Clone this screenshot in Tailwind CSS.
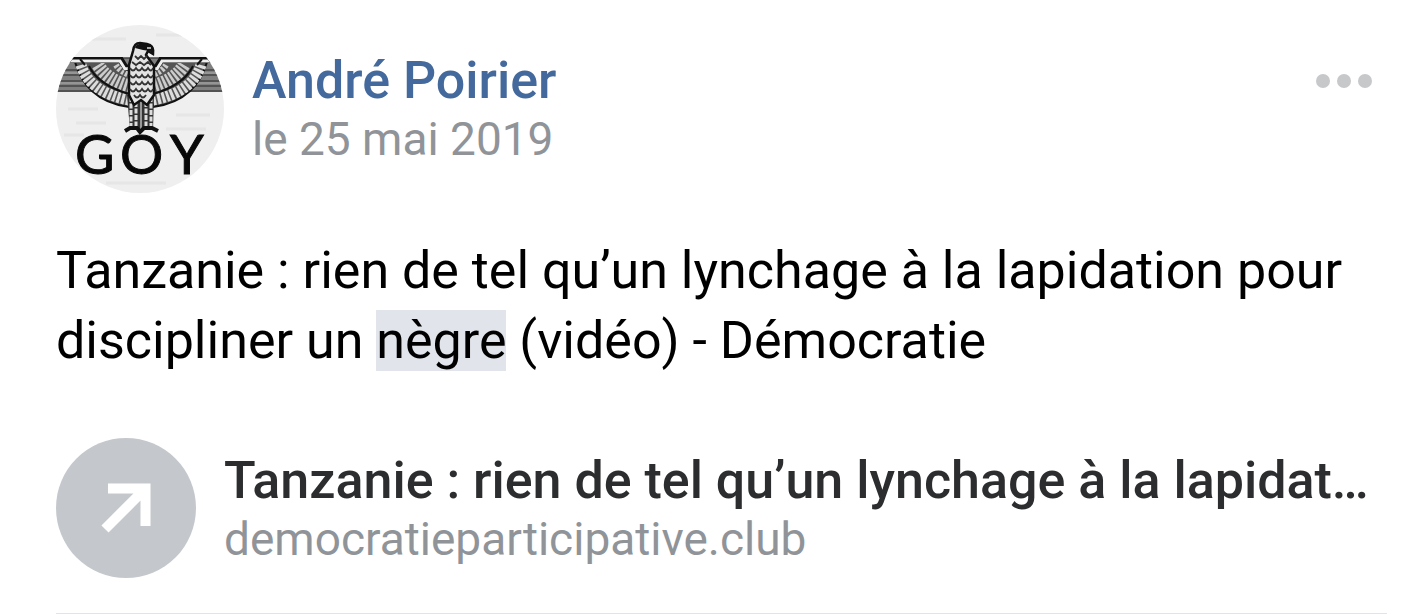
<!DOCTYPE html>
<html lang="fr">
<head>
  <meta charset="UTF-8" />
  <meta name="viewport" content="width=device-width, initial-scale=1.0" />
  <title>André Poirier</title>
  <script src="https://cdn.jsdelivr.net/npm/@tailwindcss/browser@4"></script>
</head>
<body class="bg-white font-[Roboto,sans-serif]">

<article class="ml-14 mr-9 pt-[25px] border-b border-[#e1e3e6]">
  <header class="flex items-start">
    <svg class="size-[168px] shrink-0 rounded-full" viewBox="0 0 168 168" role="img" aria-label="Avatar">
      <rect width="168" height="168" fill="#efefef" />
      <path d="M30 14h40M100 10h30M12 84h30M120 90h34M20 98h30M8 110h20M50 158h60M110 104h40" stroke="#e6e6e6" stroke-width="3" />
      <rect y="33" width="168" height="34" fill="#808080" />
      <path d="M0 33H168M0 45H168M0 50H168M0 56H168M0 61H168M0 66H168" stroke="#444" stroke-width="1.5" />
      <path d="M0 48H168M0 58H168" stroke="#aaa" />
      <defs>
        <!-- left wing, mirrored for the right one -->
        <g id="wing">
          <path d="M19 37Q24 55 36 66Q50 79 73 82L78 42L69 45L64 37Z" fill="#555" stroke="#111" stroke-width="2" />
          <path d="M25 40Q33 67 73 75" fill="none" stroke="#ddd" stroke-width="11" stroke-dasharray="3 1.6" />
          <path d="M42 40Q51 55 74 61" fill="none" stroke="#ccc" stroke-width="13" stroke-dasharray="2.600 1.600" />
          <path d="M60 40Q64 47 76 51" fill="none" stroke="#ccc" stroke-width="6" stroke-dasharray="2.600 1.600" />
          <path d="M33 41Q42 60 73 69" fill="none" stroke="#111" stroke-width="2" />
          <path d="M12 35H65L70 43L77 42" fill="none" stroke="#111" stroke-width="6" />
          <path d="M10 36H64L69 44L77 43" fill="none" stroke="#eee" stroke-width="3" />
          <path d="M24 34L29 40" stroke="#111" stroke-width="2" />
        </g>
      </defs>
      <use href="#wing" />
      <use href="#wing" transform="translate(170 0) scale(-1 1)" />
      <path d="M71 70H98L97 105H74Z" fill="#333" />
      <path d="M75 72V103M80 77V105M90 77V105M95 72V103" stroke="#ddd" stroke-width="3" stroke-dasharray="5 1.500" />
      <path d="M85 76V105" stroke="#999" stroke-width="2" />
      <path d="M77 26Q78 18 84 18L91 19Q98 20 97 29L92 26L90 30L98 41V70L91 80L85 75L78 80L73 70V40Z" fill="#e4e4e4" stroke="#111" stroke-width="2.500" />
      <path d="M79 23Q81 17 91 19Q97 19 98 24L96 29L94 26L87 25Z" fill="#111" />
      <path d="M91 23H95" stroke="#ddd" stroke-width="1.500" />
      <path d="M79 31l3 3 3-3 3 3 3-3M76 37l4 3 4-3 4 3 4-3 3 3M74 43q3 5 6 0q3 5 6 0q3 5 6 0q3 5 5 0M74 50q3 5 6 0q3 5 6 0q3 5 6 0q3 5 5 0M74 57q3 5 6 0q3 5 6 0q3 5 6 0q3 5 5 0M74 64q3 5 6 0q3 5 6 0q3 5 6 0q3 5 5 0M78 70q3 5 6 0q3 5 6 0" fill="none" stroke="#333" stroke-width="1.800" />
      <path d="M69 106L74 103H81L84 107L88 103H96L102 106" fill="none" stroke="#111" stroke-width="4" />
      <text y="149" font-family="Lato, sans-serif" font-size="54" fill="#080808" stroke="#080808"><tspan x="19">G</tspan><tspan x="64">O</tspan><tspan x="114">Y</tspan></text>
    </svg>
    <div class="ml-7 mt-[25px] grow">
      <a href="#" class="block w-fit text-[52px] leading-[62px] font-medium text-[#44699c]">André Poirier</a>
      <time datetime="2019-05-25" class="block text-[46px] leading-[54px] text-[#909499]">le 25 mai 2019</time>
    </div>
    <button type="button" aria-label="Plus" class="mt-[49px] mr-[15px] flex gap-[7px]">
      <span class="size-3.5 rounded-full bg-[#c6c8ca]"></span>
      <span class="size-3.5 rounded-full bg-[#c6c8ca]"></span>
      <span class="size-3.5 rounded-full bg-[#c6c8ca]"></span>
    </button>
  </header>

  <p class="mt-[43px] text-[52px] leading-[70px] text-black">Tanzanie : rien de tel qu’un lynchage à la lapidation pour discipliner un <mark class="bg-[#e1e5eb] text-black">nègre</mark> (vidéo) - Démocratie</p>

  <a href="#" class="mt-[62px] mb-[35px] flex">
    <svg class="size-[140px] shrink-0" viewBox="0 0 140 140" aria-hidden="true">
      <circle cx="70" cy="70" r="70" fill="#c4c8cd" />
      <path d="M52 50.500H89.500V88M87 53L49 91" fill="none" stroke="#fff" stroke-width="10" />
    </svg>
    <span class="ml-7 mt-3 min-w-0 grow pr-2">
      <span class="block truncate text-[52px] leading-[62px] font-medium text-[#2c2d2e]">Tanzanie : rien de tel qu’un lynchage à la lapidation</span>
      <span class="block truncate text-[46px] leading-[54px] text-[#909499]">democratieparticipative.club</span>
    </span>
  </a>
</article>

</body>
</html>
